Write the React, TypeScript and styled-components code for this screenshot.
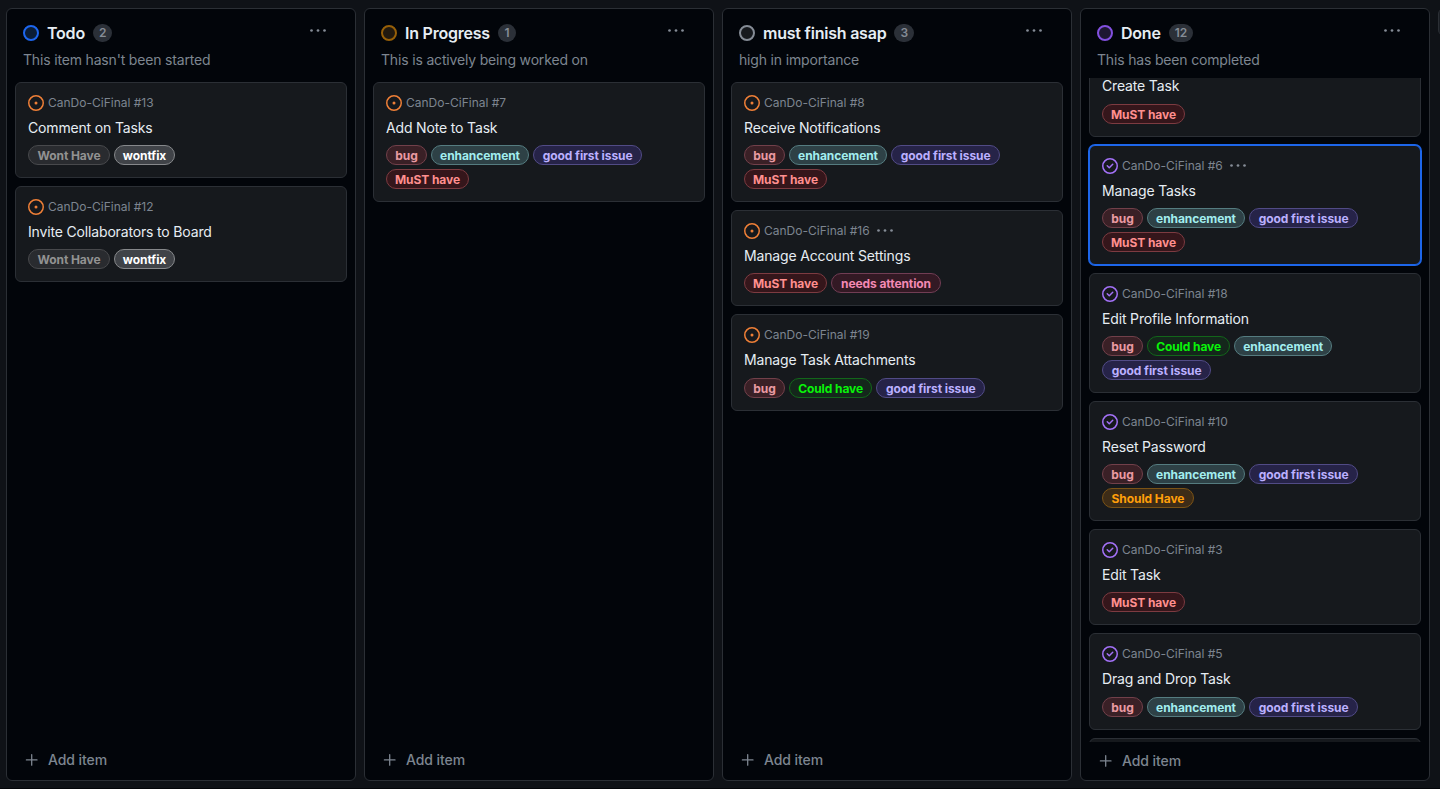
import React from "react";
import styled, { createGlobalStyle } from "styled-components";

const GlobalStyle = createGlobalStyle`
  * { box-sizing: border-box; }
  html, body { margin: 0; padding: 0; background: #0f1217; }
  body {
    font-family: Inter, "Liberation Sans", sans-serif;
    color: #e6edf3;
    overflow: hidden;
  }
`;

type LabelName =
  | "bug"
  | "enhancement"
  | "good first issue"
  | "MuST have"
  | "Could have"
  | "Should Have"
  | "Wont Have"
  | "wontfix"
  | "needs attention";

interface LabelStyle { fg: string; bg: string; line: string; width: number; }

const labelStyles: Record<LabelName, LabelStyle> = {
  bug: { fg: "#e99aa2", bg: "#3a2026", line: "#72404a", width: 41 },
  enhancement: { fg: "#a2eeef", bg: "#2e4146", line: "#557c80", width: 98 },
  "good first issue": { fg: "#bbb0ff", bg: "#262348", line: "#514b86", width: 109.3 },
  "MuST have": { fg: "#ff8f8f", bg: "#35161b", line: "#7d3b41", width: 83 },
  "Could have": { fg: "#09f309", bg: "#14271b", line: "#12661a", width: 83.2 },
  "Should Have": { fg: "#ff9f0a", bg: "#3d2c17", line: "#7b5316", width: 92 },
  "Wont Have": { fg: "#929292", bg: "#292b2f", line: "#48494c", width: 82 },
  wontfix: { fg: "#ffffff", bg: "#404348", line: "#86888b", width: 61 },
  "needs attention": { fg: "#f389b4", bg: "#331924", line: "#713d54", width: 110 },
};

interface CardData { id?: number; title?: string; labels: LabelName[]; menu?: boolean; selected?: boolean; }
interface ColumnData {
  name: string; count: number; note: string; ring: string; fill: string;
  done?: boolean; scroll?: boolean; cards: CardData[];
}

const columns: ColumnData[] = [
  {
    name: "Todo", count: 2, note: "This item hasn't been started", ring: "#1d66ee", fill: "#0b1d36",
    cards: [
      { id: 13, title: "Comment on Tasks", labels: ["Wont Have", "wontfix"] },
      { id: 12, title: "Invite Collaborators to Board", labels: ["Wont Have", "wontfix"] },
    ],
  },
  {
    name: "In Progress", count: 1, note: "This is actively being worked on", ring: "#965f08", fill: "#21190f",
    cards: [
      { id: 7, title: "Add Note to Task", labels: ["bug", "enhancement", "good first issue", "MuST have"] },
    ],
  },
  {
    name: "must finish asap", count: 3, note: "high in importance", ring: "#858c96", fill: "#16191d",
    cards: [
      { id: 8, title: "Receive Notifications", labels: ["bug", "enhancement", "good first issue", "MuST have"] },
      { id: 16, title: "Manage Account Settings", labels: ["MuST have", "needs attention"], menu: true },
      { id: 19, title: "Manage Task Attachments", labels: ["bug", "Could have", "good first issue"] },
    ],
  },
  {
    name: "Done", count: 12, note: "This has been completed", ring: "#8250df", fill: "#1d1731",
    done: true, scroll: true,
    cards: [
      { title: "Create Task", labels: ["MuST have"] },
      { id: 6, title: "Manage Tasks", labels: ["bug", "enhancement", "good first issue", "MuST have"], menu: true, selected: true },
      { id: 18, title: "Edit Profile Information", labels: ["bug", "Could have", "enhancement", "good first issue"] },
      { id: 10, title: "Reset Password", labels: ["bug", "enhancement", "good first issue", "Should Have"] },
      { id: 3, title: "Edit Task", labels: ["MuST have"] },
      { id: 5, title: "Drag and Drop Task", labels: ["bug", "enhancement", "good first issue"] },
      { labels: [] },
    ],
  },
];

const Board = styled.main`
  display: flex;
  gap: 8px;
  height: 789px;
  padding: 8px 0 7px 6px;
  overflow: hidden;
  background: #0f1217;
  border-bottom: 1px solid #030509;
`;

const ColumnBox = styled.section`
  flex: 0 0 350px;
  height: 773px;
  display: flex;
  flex-direction: column;
  background: #02050a;
  border: 1px solid #2b2f35;
  border-radius: 6px;
  overflow: hidden;
`;

const AddColumn = styled.div`
  flex: 0 0 32px;
  height: 28px;
  border: 1px solid #2b2f35;
  border-radius: 6px;
  background: #1b1f25;
`;

const Header = styled.header`
  flex: 0 0 69px;
  padding: 12px 16px 0;
`;

const HeaderRow = styled.div`
  display: flex;
  align-items: center;
  height: 24px;
`;

const Ring = styled.span<{ $ring: string; $fill: string }>`
  flex: none;
  width: 16px;
  height: 16px;
  border: 2px solid ${(p) => p.$ring};
  border-radius: 50%;
  background: ${(p) => p.$fill};
`;

const Name = styled.h2`
  margin: 0 0 0 8px;
  font-size: 16px;
  line-height: 24px;
  font-weight: 600;
  letter-spacing: -0.22px;
  white-space: nowrap;
`;

const Count = styled.span`
  min-width: 18px;
  height: 18px;
  margin-left: 8px;
  padding: 0 6px;
  border-radius: 9px;
  background: #2b3038;
  color: #858c96;
  font-size: 12px;
  line-height: 18px;
  font-weight: 600;
  text-align: center;
`;

const HeaderMenu = styled.button`
  display: flex;
  margin: 0 13px 5px auto;
  padding: 0;
  border: 0;
  background: none;
`;

const Note = styled.p`
  margin: 5px 0 0;
  color: #7d8590;
  font-size: 14px;
  line-height: 20px;
  letter-spacing: -0.17px;
`;

const List = styled.div<{ $scroll?: boolean }>`
  flex: 1;
  min-height: 0;
  display: flex;
  flex-direction: column;
  gap: 8px;
  overflow: hidden;
  padding: 4px 8px 0;
  & > :first-child { margin-top: ${(p) => (p.$scroll ? "-41.6px" : "0")}; }
`;

const CardBox = styled.article<{ $selected?: boolean }>`
  flex: none;
  padding: 12px;
  border: 1px solid ${(p) => (p.$selected ? "#1d66ea" : "#2b2f35")};
  box-shadow: ${(p) => (p.$selected ? "0 0 0 1px #1d66ea" : "none")};
  border-radius: 6px;
  background: #16191d;
`;

const Reference = styled.div`
  display: flex;
  align-items: center;
  height: 16px;
  color: #7d8590;
  font-size: 12px;
  line-height: 16px;
`;

const RefText = styled.span`
  margin: 0 7px 0 4px;
`;

const Title = styled.h3`
  margin: 7px 0 7.2px;
  font-size: 14px;
  line-height: 20px;
  font-weight: 400;
  letter-spacing: -0.16px;
`;

const Labels = styled.div`
  display: flex;
  flex-wrap: wrap;
  gap: 4px;
  padding-right: 20px;
`;

const Pill = styled.span<{ $look: LabelStyle }>`
  width: ${(p) => p.$look.width}px;
  height: 20px;
  border: 1px solid ${(p) => p.$look.line};
  border-radius: 10px;
  background: ${(p) => p.$look.bg};
  color: ${(p) => p.$look.fg};
  font-size: 12px;
  line-height: 19px;
  font-weight: 700;
  letter-spacing: -0.08px;
  text-align: center;
  white-space: nowrap;
`;

const AddItem = styled.button<{ $short?: boolean }>`
  flex: 0 0 ${(p) => (p.$short ? "38px" : "40px")};
  display: flex;
  align-items: center;
  gap: 8px;
  padding: 0 17px;
  border: 0;
  background: none;
  color: #7d8590;
  font: 500 14px/20px Inter, "Liberation Sans", sans-serif;
  letter-spacing: -0.08px;
  text-align: left;
`;

const Dots = () => (
  <svg width="16" height="16" viewBox="0 0 16 16" fill="#858c96" aria-hidden="true">
    <circle cx="1.5" cy="7.5" r="1.35" />
    <circle cx="8" cy="7.5" r="1.35" />
    <circle cx="14.5" cy="7.5" r="1.35" />
  </svg>
);

const OpenIcon = () => (
  <svg width="16" height="16" viewBox="0 0 16 16" fill="#ee7f37" aria-hidden="true">
    <path d="M8 9.5a1.5 1.5 0 1 0 0-3 1.5 1.5 0 0 0 0 3Z" />
    <path d="M8 0a8 8 0 1 1 0 16A8 8 0 0 1 8 0ZM1.5 8a6.5 6.5 0 1 0 13 0 6.5 6.5 0 0 0-13 0Z" />
  </svg>
);

const DoneIcon = () => (
  <svg width="16" height="16" viewBox="0 0 16 16" fill="#a371f7" aria-hidden="true">
    <path d="M11.28 6.78a.75.75 0 0 0-1.06-1.06L7.25 8.69 5.78 7.22a.75.75 0 0 0-1.06 1.06l2 2a.75.75 0 0 0 1.06 0l3.5-3.5Z" />
    <path d="M16 8A8 8 0 1 1 0 8a8 8 0 0 1 16 0Zm-1.5 0a6.5 6.5 0 1 0-13 0 6.5 6.5 0 0 0 13 0Z" />
  </svg>
);

const PlusIcon = () => (
  <svg width="16" height="16" viewBox="0 0 16 16" stroke="#7d8590" strokeWidth="1.3" strokeLinecap="round" aria-hidden="true">
    <path d="M7.7 2.6v10.6M2.4 7.9h10.6" />
  </svg>
);

const Card = ({ card, done }: { card: CardData; done?: boolean }) => (
  <CardBox $selected={card.selected}>
    <Reference>
      {done ? <DoneIcon /> : <OpenIcon />}
      {card.id !== undefined && <RefText>CanDo-CiFinal #{card.id}</RefText>}
      {card.menu && <Dots />}
    </Reference>
    {card.title && <Title>{card.title}</Title>}
    <Labels>
      {card.labels.map((label) => (
        <Pill key={label} $look={labelStyles[label]}>{label}</Pill>
      ))}
    </Labels>
  </CardBox>
);

const Column = ({ column }: { column: ColumnData }) => (
  <ColumnBox>
    <Header>
      <HeaderRow>
        <Ring $ring={column.ring} $fill={column.fill} />
        <Name>{column.name}</Name>
        <Count>{column.count}</Count>
        <HeaderMenu aria-label="Column menu"><Dots /></HeaderMenu>
      </HeaderRow>
      <Note>{column.note}</Note>
    </Header>
    <List $scroll={column.scroll}>
      {column.cards.map((card, index) => (
        <Card key={index} card={card} done={column.done} />
      ))}
    </List>
    <AddItem $short={column.scroll}>
      <PlusIcon />
      Add item
    </AddItem>
  </ColumnBox>
);

export default function App() {
  return (
    <>
      <GlobalStyle />
      <Board>
        {columns.map((column) => (
          <Column key={column.name} column={column} />
        ))}
        <AddColumn />
      </Board>
    </>
  );
}
